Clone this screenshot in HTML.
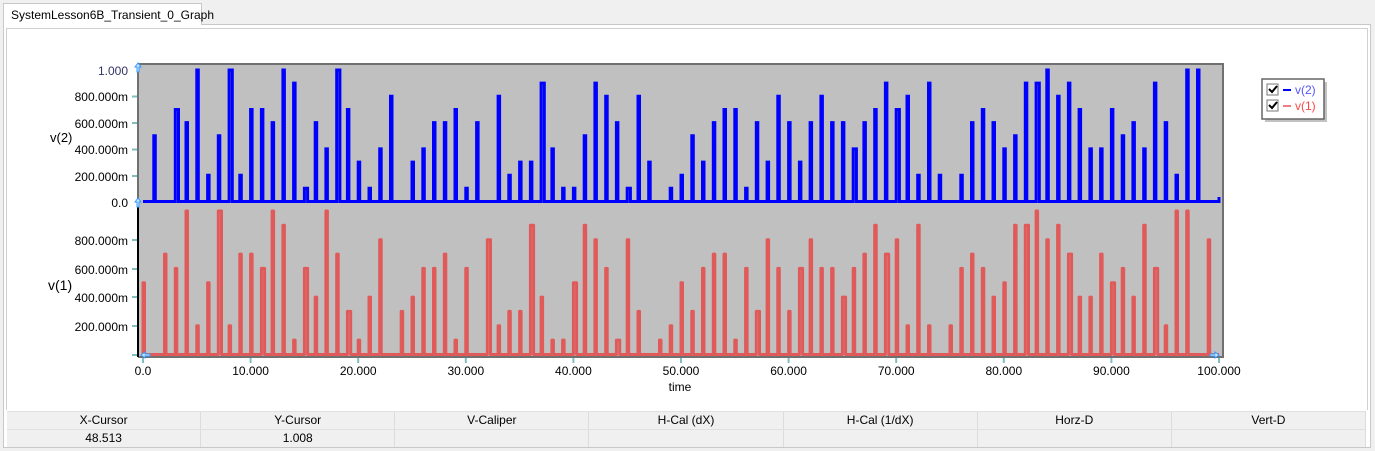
<!DOCTYPE html>
<html><head><style>
body{margin:0;width:1375px;height:451px;background:#f0f0f0;font-family:"Liberation Sans",sans-serif;position:relative;overflow:hidden}
.tab{position:absolute;left:3px;top:3px;width:199px;height:22px;background:#fff;border:1px solid #c8c8c8;border-bottom:none;font-size:12px;line-height:22px;padding-left:7px;box-sizing:border-box}
.panel{position:absolute;left:3px;top:24px;width:1368px;height:424px;background:#fff;border:1px solid #c8c8c8;box-sizing:border-box}
.inner{position:absolute;left:6px;top:28px;width:1362px;height:382px;background:#fff;border:1px solid #d0d0d0;border-bottom:none;box-sizing:border-box}
.tbl{position:absolute;left:7px;top:411px;width:1359px;font-size:12px}
.row{display:flex;height:17px;line-height:17px;background:#f0f0f0}
.row div{flex:1;text-align:center;border-right:1px solid #dcdcdc}
.r1{border-top:1px solid #e0e0e0;border-bottom:1px solid #e0e0e0}
</style></head><body>
<div class="panel"></div>
<div class="tab">SystemLesson6B_Transient_0_Graph</div>
<div class="inner"></div>
<svg id="s" width="1375" height="451" style="position:absolute;left:0;top:0" font-family="Liberation Sans, sans-serif" font-size="12">
<rect x="138" y="64" width="1085" height="293" fill="#c0c0c0"/>
<path d="M138 64H1223V357H138" fill="none" stroke="#707070" stroke-width="2"/>
<line x1="138" y1="203" x2="138" y2="357" stroke="#000" stroke-width="2"/>
<line x1="138" y1="64" x2="138" y2="203" stroke="#707070" stroke-width="2"/>
<g text-anchor="end" fill="#000">
<text x="128" y="75" fill="#333366">1.000</text><text x="128" y="101">800.000m</text><text x="128" y="128">600.000m</text><text x="128" y="154">400.000m</text><text x="128" y="181">200.000m</text><text x="128" y="207">0.0</text>
<text x="128" y="245">800.000m</text><text x="128" y="274">600.000m</text><text x="128" y="302">400.000m</text><text x="128" y="331">200.000m</text>
</g>
<g stroke="#7fbfbf" stroke-width="2">
<line x1="132" y1="96.5" x2="137" y2="96.5"/><line x1="132" y1="123" x2="137" y2="123"/><line x1="132" y1="149.5" x2="137" y2="149.5"/><line x1="132" y1="176" x2="137" y2="176"/>
<line x1="132" y1="240" x2="137" y2="240"/><line x1="132" y1="269" x2="137" y2="269"/><line x1="132" y1="297" x2="137" y2="297"/><line x1="132" y1="326" x2="137" y2="326"/><line x1="132" y1="355" x2="137" y2="355"/>
</g>
<text x="50" y="142" font-size="13">v(2)</text>
<text x="48" y="290" font-size="14">v(1)</text>
<g id="xt" text-anchor="middle"></g>
<text x="680" y="391" text-anchor="middle">time</text>
<g id="plots"></g>
<path d="M138 63l-3 4h2v5h2v-5h2z M138 198l-3 4h2v5h2v-5h2z" fill="#cfe6ff" stroke="#3399ff" stroke-width="1"/>
<path d="M141 355l4-3v2h5v2h-5v2z M1219 355l-4-3v2h-5v2h5v2z" fill="#cfe6ff" stroke="#3399ff" stroke-width="1"/>
<rect x="1265" y="82" width="62" height="40" fill="#999" opacity=".6"/>
<rect x="1262" y="79" width="62" height="40" fill="#fff" stroke="#666" stroke-width="1.5"/>
<rect x="1267" y="84" width="11" height="11" fill="#fff" stroke="#777"/><path d="M1269 89l3 3 5-6" stroke="#000" stroke-width="2" fill="none"/>
<rect x="1267" y="100" width="11" height="11" fill="#fff" stroke="#777"/><path d="M1269 105l3 3 5-6" stroke="#000" stroke-width="2" fill="none"/>
<line x1="1283" y1="90" x2="1291" y2="90" stroke="#00f" stroke-width="2"/><text x="1295" y="94" fill="#5555ff">v(2)</text>
<line x1="1283" y1="106" x2="1291" y2="106" stroke="#f08080" stroke-width="2"/><text x="1295" y="110" fill="#ff4444">v(1)</text>
</svg>
<div class="tbl">
<div class="row r1"><div>X-Cursor</div><div>Y-Cursor</div><div>V-Caliper</div><div>H-Cal (dX)</div><div>H-Cal (1/dX)</div><div>Horz-D</div><div>Vert-D</div></div>
<div class="row"><div>48.513</div><div>1.008</div><div></div><div></div><div></div><div></div><div></div></div>
</div>
<script>
var v=[.5,0,.7,.6,1,.2,.5,1,.2,.7,.7,.6,1,.9,.1,.6,.4,1,.7,.3,.1,.4,.8,0,.3,.4,.6,.6,.7,.1,.6,0,.8,.2,.3,.3,.9,.4,.1,.1,.5,.9,.8,.6,.1,.8,.3,0,.1,.2,.5,.3,.6,.7,.7,.1,.6,.3,.8,.6,.3,.6,.8,.6,.6,.4,.6,.7,.9,.7,.8,.2,.9,.2,0,.2,.6,.7,.6,.4,.5,.9,.9,1,.8,.9,.7,.4,.4,.7,.5,.6,.4,.9,.6,.2,1,1,0,.8];
var wide={7:1,11:1,15:1,19:1,32:1,36:1,40:1,44:1,57:1,61:1,65:1,69:1,82:1,86:1,90:1,94:1};
var wideB={2:1,7:1,17:1,14:1,36:1,44:1,65:1,69:1,82:1};
function X(t){return 143+10.76*t}
function path(off,b,sc,wd,skip){var d="M"+X(0)+" "+b;for(var i=0;i<v.length;i++){if(!v[i]||i==skip)continue;var t=i+off,w=wd[i]?.3:.14;var y=b-v[i]*sc;d+="L"+X(t).toFixed(1)+" "+b+"L"+X(t).toFixed(1)+" "+y.toFixed(1)+"L"+X(t+w).toFixed(1)+" "+y.toFixed(1)+"L"+X(t+w).toFixed(1)+" "+b;}d+="L"+X(100)+" "+b;return d;}
var g=document.getElementById("plots");
g.innerHTML='<path d="'+path(0,354.5,143.5,wide,-1)+'" fill="none" stroke="#e05a5a" stroke-width="3" stroke-linejoin="round"/>'+
'<path d="'+path(1,201.5,131.5,wideB,99)+'L'+X(100)+' 197" fill="none" stroke="#0000ff" stroke-width="3"/>';
var xt=document.getElementById("xt"),s="";
for(var k=0;k<=10;k++){var x=X(k*10);s+='<line x1="'+x+'" y1="358" x2="'+x+'" y2="363" stroke="#7fbfbf" stroke-width="2"/><text x="'+x+'" y="375">'+(k==0?"0.0":(k*10)+".000")+'</text>';}
xt.innerHTML=s;
</script>
</body></html>
